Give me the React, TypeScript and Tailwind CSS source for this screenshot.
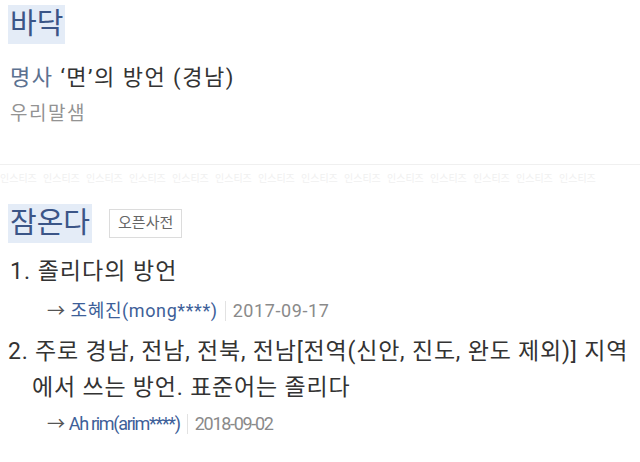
const font = { fontFamily: 'Roboto, "Noto Sans CJK KR", sans-serif' };

const Title = ({ text }: { text: string }) => (
  <span className="inline-block bg-[#e4ecf7] px-[2px] text-[29px] leading-[39px] text-[#3b5587]">{text}</span>
);

const Attribution = ({ name, date, narrow }: { name: string; date: string; narrow?: boolean }) => (
  <div className={narrow ? "flex items-center pl-[39px] text-[18px] leading-[26px] tracking-[-1.3px]" : "flex items-center pl-[39px] text-[18px] leading-[26px] tracking-[0.6px]"}>
    <span className="text-[#555]">→</span>
    <span className="ml-[5px] text-[#3e5f99]">{name}</span>
    <span className="mx-[7px] h-[20px] w-px bg-[#e2e2e2]"></span>
    <span className="text-[#8a8a8a]">{date}</span>
  </div>
);

const Watermark = () => (
  <div className="flex h-[26px] items-center overflow-hidden whitespace-nowrap text-[10px] text-[#f0f0f0] select-none">
    {Array.from({ length: 14 }).map((_, i) => (
      <span key={i} className="w-[43px] shrink-0">
        인스티즈
      </span>
    ))}
  </div>
);

export default function App() {
  return (
    <div className="h-[462px] w-[640px] overflow-hidden bg-white" style={font}>
      <div className="px-[8px] pt-[5px]">
        <Title text="바닥" />
        <div className="mt-[19px] pl-[2px] text-[22px] leading-[30px] tracking-[1.5px] text-[#333]">
          <span className="text-[#5c7190]">명사</span> ‘면’의 방언 (경남)
        </div>
        <div className="mt-[8px] pl-[2px] text-[19px] leading-[26px] tracking-[1.5px] text-[#939393]">우리말샘</div>
      </div>
      <div className="mt-[37px] h-px bg-[#f0f0f0]"></div>
      <Watermark />
      <div className="px-[8px] pt-[13px]">
        <div className="flex items-center">
          <Title text="잠온다" />
          <span className="ml-[17px] border border-[#dcdcdc] px-[8px] text-[15px] leading-[27px] text-[#666]">오픈사전</span>
        </div>
        <div className="mt-[14px] pl-[2px] text-[23px] leading-[30px] tracking-[1px] text-[#333]">1. 졸리다의 방언</div>
        <div className="mt-[11px]">
          <Attribution name="조혜진(mong****)" date="2017-09-17" />
        </div>
        <div className="mt-[10px] whitespace-nowrap text-[23px] leading-[36px] tracking-[0.8px] text-[#333]">
          <div>2. 주로 경남, 전남, 전북, 전남[전역(신안, 진도, 완도 제외)] 지역</div>
          <div className="pl-[24px]">에서 쓰는 방언. 표준어는 졸리다</div>
        </div>
        <div className="mt-[5px]">
          <Attribution name="Ah rim(arim****)" date="2018-09-02" narrow />
        </div>
      </div>
    </div>
  );
}
